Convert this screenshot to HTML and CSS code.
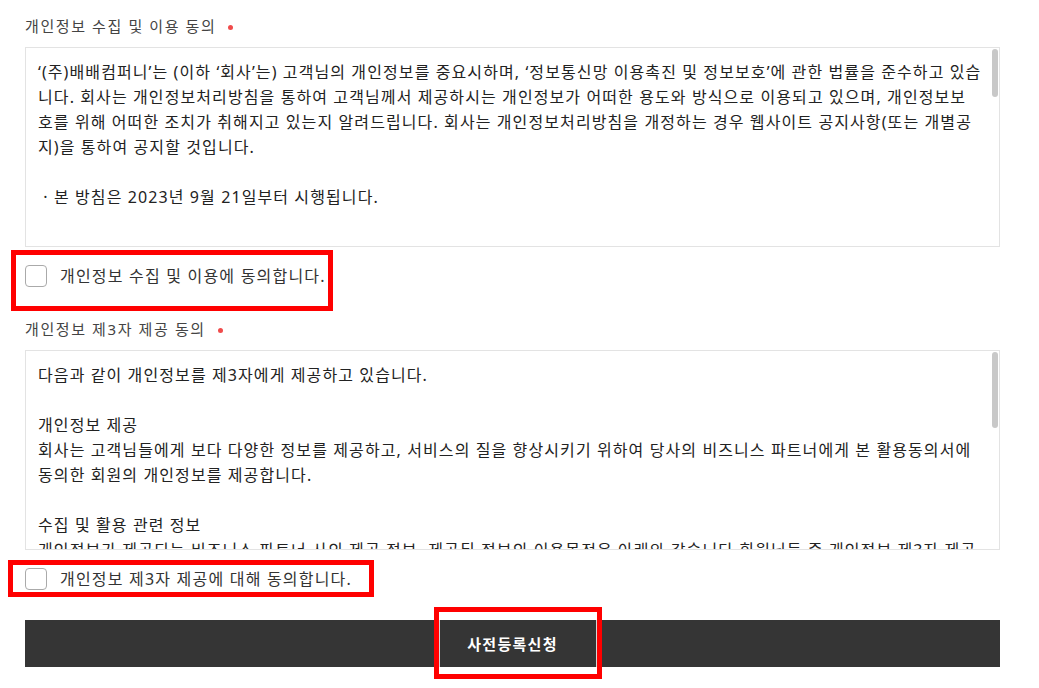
FILE: index.html
```html
<!DOCTYPE html>
<html>
    <head>
        <title>사전등록</title>
        <meta charset="UTF-8">
        <link rel="stylesheet" href="styles.css">
    </head>
    <body>
        <div class="form">
            <div class="field">
                <div class="field-label">개인정보 수집 및 이용 동의<span class="req"></span></div>
                <div class="terms terms-privacy">‘(주)배배컴퍼니’는 (이하 ‘회사’는) 고객님의 개인정보를 중요시하며, ‘정보통신망 이용촉진 및 정보보호’에 관한 법률을 준수하고 있습
니다. 회사는 개인정보처리방침을 통하여 고객님께서 제공하시는 개인정보가 어떠한 용도와 방식으로 이용되고 있으며, 개인정보보
호를 위해 어떠한 조치가 취해지고 있는지 알려드립니다. 회사는 개인정보처리방침을 개정하는 경우 웹사이트 공지사항(또는 개별공
지)을 통하여 공지할 것입니다.

 · 본 방침은 2023년 9월 21일부터 시행됩니다.


■ 수집하는 개인정보 항목
회사는 사전등록 신청, 상담, 서비스 신청 등을 위해 아래와 같은 개인정보를 수집하고 있습니다.
 · 수집항목 : 이름, 연락처, 이메일, 회사명
 · 개인정보 수집방법 : 홈페이지(사전등록 신청)

■ 개인정보의 수집 및 이용목적
회사는 수집한 개인정보를 다음의 목적을 위해 활용합니다.
 · 사전등록 확인 및 행사 안내
 · 신규 서비스 개발 및 마케팅, 광고에의 활용
 · 이벤트 등 광고성 정보 전달

■ 개인정보의 보유 및 이용기간
원칙적으로, 개인정보 수집 및 이용목적이 달성된 후에는 해당 정보를 지체 없이 파기합니다.

■ 개인정보의 파기절차 및 방법
회사는 원칙적으로 개인정보 수집 및 이용목적이 달성된 후에는 해당 정보를 지체없이 파기합니다.
 · 파기절차 : 목적이 달성된 후 내부 방침에 따라 일정 기간 저장된 후 파기됩니다.
 · 파기방법 : 전자적 파일형태로 저장된 개인정보는 기록을 재생할 수 없는 기술적 방법을 사용하여
   삭제합니다.

■ 개인정보 제공
회사는 이용자의 개인정보를 원칙적으로 외부에 제공하지 않습니다.</div>
                <label class="agree"><span class="check"></span>개인정보 수집 및 이용에 동의합니다.</label>
            </div>

            <div class="field">
                <div class="field-label">개인정보 제3자 제공 동의<span class="req"></span></div>
                <div class="terms terms-third">다음과 같이 개인정보를 제3자에게 제공하고 있습니다.

개인정보 제공
회사는 고객님들에게 보다 다양한 정보를 제공하고, 서비스의 질을 향상시키기 위하여 당사의 비즈니스 파트너에게 본 활용동의서에
동의한 회원의 개인정보를 제공합니다.

수집 및 활용 관련 정보
개인정보가 제공되는 비즈니스 파트너 사의 제공 정보, 제공된 정보의 이용목적은 아래와 같습니다 회원님들 중 개인정보 제3자 제공
에 동의하신 분에 한합니다.
 · 제공받는 자 : 행사 공동 주최사 및 후원사
 · 제공 항목 : 이름, 연락처, 이메일, 회사명
 · 이용 목적 : 행사 안내 및 마케팅 정보 제공

보유 및 이용기간
제공된 날로부터 동의 철회 시 또는 제공 목적 달성 시까지 보유합니다.

동의를 거부할 권리
고객님은 개인정보 제3자 제공에 대한 동의를 거부할 수 있습니다.</div>
                <label class="agree"><span class="check"></span>개인정보 제3자 제공에 대해 동의합니다.</label>
            </div>

            <button type="button" class="submit">사전등록신청</button>
        </div>

        <!-- review marks -->
        <div class="mark mark-agree1"></div>
        <div class="mark mark-agree2"></div>
        <div class="mark mark-submit"></div>
    </body>
</html>
```

FILE: styles.css
```css
body {
    margin: 0;
    background: #fff;
    font-family: "Noto Sans", "Noto Sans CJK KR", sans-serif;
    color: #222;
}
.form {
    padding: 14px 39px 20px 25px;
}
.field-label {
    font-size: 15px;
    line-height: 24px;
    letter-spacing: 1.6px;
    color: #444;
}
.req {
    display: inline-block;
    width: 5px;
    height: 5px;
    margin-left: 12px;
    border-radius: 50%;
    background: #f04b4b;
    vertical-align: middle;
}
.terms {
    position: relative;
    margin-top: 9px;
    padding: 12px 8px 12px 12px;
    box-sizing: border-box;
    height: 200px;
    border: 1px solid #e3e3e3;
    overflow: hidden;
    white-space: pre;
    font-size: 16px;
    line-height: 25px;
    letter-spacing: 1.1px;
    color: #222;
}
/* scroll thumb */
.terms::after {
    content: "";
    position: absolute;
    top: 1px;
    right: 1px;
    width: 6px;
    border-radius: 3px;
    background: #c8c8c8;
}
.terms-privacy::after {
    height: 48px;
}
.terms-third::after {
    height: 76px;
}
.agree {
    display: flex;
    align-items: center;
    margin-top: 18px;
    margin-bottom: 30px;
    font-size: 16px;
    line-height: 22px;
    letter-spacing: 1.2px;
    color: #333;
}
.check {
    width: 22px;
    height: 22px;
    box-sizing: border-box;
    border: 1px solid #aaa;
    border-radius: 4px;
    margin-right: 13px;
    background: #fff;
}
.submit {
    display: block;
    width: 100%;
    height: 47px;
    border: none;
    background: #353535;
    color: #fff;
    font-family: "Noto Sans", "Noto Sans CJK KR", sans-serif;
    font-size: 15px;
    font-weight: bold;
    letter-spacing: 1.3px;
}
.mark {
    position: absolute;
    box-sizing: border-box;
    border: 5px solid #ff0000;
    box-shadow: inset 0 0 0 1px rgba(255, 255, 255, 0.8);
}
.mark-agree1 {
    left: 11px;
    top: 250px;
    width: 322px;
    height: 61px;
}
.mark-agree2 {
    left: 8px;
    top: 560px;
    width: 366px;
    height: 37px;
}
.mark-submit {
    left: 434px;
    top: 607px;
    width: 168px;
    height: 72px;
}
```
